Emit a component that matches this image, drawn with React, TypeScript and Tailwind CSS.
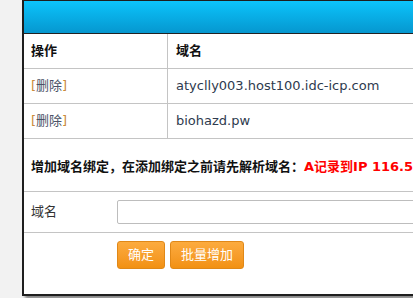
const font = {
  fontFamily: '"DejaVu Sans", Verdana, "Noto Sans CJK SC", sans-serif',
};

const domains = ["atyclly003.host100.idc-icp.com", "biohazd.pw"];

function DomainRow({ name }: { name: string }) {
  return (
    <div className="flex h-[35px] border-b border-[#c4c4c4]">
      <div className="flex w-[144px] shrink-0 items-center border-r border-[#c4c4c4] pl-[7px] text-[#4a4f5a]">
        <span className="text-[#c98a3a]">[</span>
        <span className="text-[#4a5266]">删除</span>
        <span className="text-[#c98a3a]">]</span>
      </div>
      <div className="flex items-center pl-[8px] text-[#2e3a4e]">{name}</div>
    </div>
  );
}

export default function App() {
  return (
    <div
      className="h-[298px] w-[413px] overflow-hidden bg-[#f2f2f2] pl-[22px] text-[13px]"
      style={font}
    >
      <div className="h-[296px] w-[440px] border-2 border-t border-r-0 border-[#1e1e1e] bg-white shadow-[3px_3px_3px_rgba(0,0,0,0.45)]">
        <div className="h-[33px] border-b border-[#222] bg-gradient-to-b from-[#0cc4fc] to-[#0697cf]" />

        <div className="flex h-[35px] border-b border-[#c4c4c4] font-bold text-[#111]">
          <div className="flex w-[144px] shrink-0 items-center border-r border-[#c4c4c4] pl-[7px]">
            操作
          </div>
          <div className="flex items-center pl-[8px]">域名</div>
        </div>
        {domains.map((d) => (
          <DomainRow key={d} name={d} />
        ))}

        <div className="border-b border-[#c4c4c4] pl-[7px] pt-[18px] pb-[14px] font-bold leading-[20px] whitespace-nowrap text-[#111]">
          增加域名绑定，在添加绑定之前请先解析域名：
          <span className="text-[#ff0000]">A记录到IP 116.5</span>
        </div>

        <div className="flex h-[41px] items-center border-b border-[#c4c4c4]">
          <div className="w-[93px] shrink-0 pl-[7px] text-[#333]">域名</div>
          <input
            type="text"
            className="h-[24px] w-[320px] rounded-[2px] border border-[#bdbdbd] bg-white outline-none"
          />
        </div>

        <div className="flex gap-[5px] pl-[93px] pt-[8px]">
          <button
            type="button"
            className="h-[28px] w-[48px] rounded-[3px] border border-[#e08818] bg-gradient-to-b from-[#fcab3e] to-[#f29111] text-[13px] text-white"
          >
            确定
          </button>
          <button
            type="button"
            className="h-[28px] w-[74px] rounded-[3px] border border-[#e08818] bg-gradient-to-b from-[#fcab3e] to-[#f29111] text-[13px] text-white"
          >
            批量增加
          </button>
        </div>
      </div>
    </div>
  );
}
